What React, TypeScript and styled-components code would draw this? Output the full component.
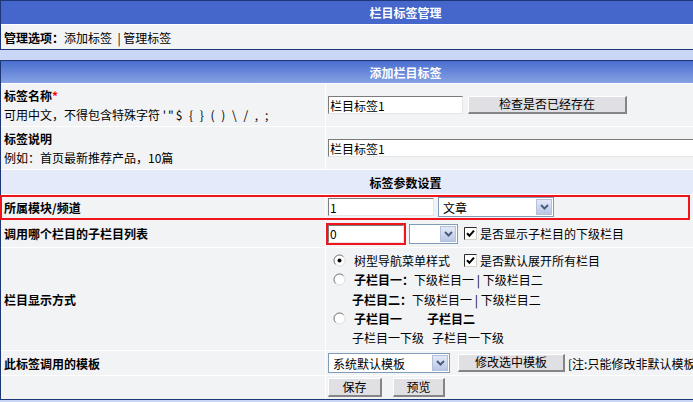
import * as React from "react";
import styled, { createGlobalStyle } from "styled-components";

const GlobalStyle = createGlobalStyle`
  html, body {
    margin: 0;
    padding: 0;
    overflow: hidden;
  }
  body {
    background: #c9d6f5;
    color: #000;
    font-family: "Noto Sans CJK SC", "DejaVu Sans", sans-serif;
    font-size: 12px;
  }
`;

const Tick: React.FC = () => (
  <TickBox viewBox="0 0 13 13" width="13" height="13">
    <rect x="0" y="0" width="13" height="13" fill="#fff" />
    <path d="M0.5 13 V0.5 H13" fill="none" stroke="#2b2b2b" />
    <path d="M12.5 0.5 V12.5 H0.5" fill="none" stroke="#d4d0c8" />
    <path d="M3 6.2 L5.4 8.8 L10 3.6" fill="none" stroke="#000" strokeWidth="2" />
  </TickBox>
);

const Radio: React.FC<{ on?: boolean }> = ({ on }) => (
  <RadioDot viewBox="0 0 13 13" width="13" height="13">
    <circle cx="6.5" cy="6.5" r="5.5" fill="#fff" stroke="#dcdcdc" />
    <path d="M2.6 10.4 A5.5 5.5 0 0 1 10.4 2.6" fill="none" stroke="#7a7a7a" />
    {on && <circle cx="6.5" cy="6.5" r="2" fill="#000" />}
  </RadioDot>
);

const Dropdown: React.FC<{ w: number; value?: string; gap?: number }> = ({ w, value, gap }) => (
  <DropBox $w={w} $gap={gap}>
    <DropText>{value}</DropText>
    <DropArrow>
      <svg viewBox="0 0 9 6" width="9" height="6">
        <path d="M1 1 L4.5 4.5 L8 1" fill="none" stroke="#4a5d83" strokeWidth="2" />
      </svg>
    </DropArrow>
  </DropBox>
);

export default function App() {
  return (
    <Page>
      <GlobalStyle />
      <Panel>
        <Caption $h={23}>栏目标签管理</Caption>
        <Bar>
          <Strong>管理选项：</Strong>添加标签&nbsp; | 管理标签
        </Bar>
      </Panel>

      <Panel $spaced>
        <Caption $h={22} $shaded>
          添加栏目标签
        </Caption>

        <Row $h={42}>
          <Label>
            <Strong>
              标签名称<Star>*</Star>
            </Strong>
            <span>可用中文，不得包含特殊字符 <Symbols>'"$ {"{"} {"}"} ( ) \ / , ;</Symbols></span>
          </Label>
          <Field>
            <TextBox $w={135} defaultValue="栏目标签1" readOnly />
            <Button $w={159} $h={18} $gap={5}>
              检查是否已经存在
            </Button>
          </Field>
        </Row>

        <Row $h={42}>
          <Label>
            <Strong>标签说明</Strong>
            <span>例如：首页最新推荐产品，10篇</span>
          </Label>
          <Field>
            <TextBox $w={430} defaultValue="栏目标签1" readOnly />
          </Field>
        </Row>

        <Section>标签参数设置</Section>

        <Row $h={24}>
          <Label>
            <Strong>所属模块/频道</Strong>
          </Label>
          <Field>
            <TextBox $w={106} defaultValue="1" readOnly />
            <Dropdown w={116} value="文章" gap={4} />
          </Field>
        </Row>

        <Row $h={27}>
          <Label>
            <Strong>调用哪个栏目的子栏目列表</Strong>
          </Label>
          <Field>
            <TextBox $w={76} defaultValue="0" readOnly $flag />
            <Dropdown w={49} gap={5} />
            <Spacer $w={6} />
            <Tick />
            <Note $gap={3}>是否显示子栏目的下级栏目</Note>
          </Field>
        </Row>

        <Row $h={102}>
          <Label>
            <Strong>栏目显示方式</Strong>
          </Label>
          <Choices>
            <Line>
              <Radio on />
              <Note $gap={8}>树型导航菜单样式</Note>
              <Spacer $w={14} />
              <Tick />
              <Note $gap={3}>是否默认展开所有栏目</Note>
            </Line>
            <Line>
              <Radio />
              <Note $gap={8}>
                <Strong>子栏目一：</Strong>下级栏目一 | 下级栏目二
              </Note>
            </Line>
            <Line $indent>
              <Note>
                <Strong>子栏目二：</Strong>下级栏目一 | 下级栏目二
              </Note>
            </Line>
            <Line>
              <Radio />
              <Note $gap={8}>
                <Strong>子栏目一</Strong>
              </Note>
              <Note $gap={25}>
                <Strong>子栏目二</Strong>
              </Note>
            </Line>
            <Line $indent>
              <Note>子栏目一下级</Note>
              <Note $gap={8}>子栏目一下级</Note>
            </Line>
          </Choices>
        </Row>

        <Row $h={24}>
          <Label>
            <Strong>此标签调用的模板</Strong>
          </Label>
          <Field>
            <Dropdown w={122} value="系统默认模板" />
            <Button $w={107} $h={18} $gap={8}>
              修改选中模板
            </Button>
            <Note $gap={3}>[注:只能修改非默认模板]</Note>
          </Field>
        </Row>

        <Row $h={23}>
          <Label />
          <Field>
            <Button $w={54} $h={19}>
              保存
            </Button>
            <Button $w={52} $h={19} $gap={11}>
              预览
            </Button>
          </Field>
        </Row>
      </Panel>

      <Mark />
    </Page>
  );
}

const Page = styled.div`
  position: relative;
  width: 811px;
`;

const Panel = styled.div<{ $spaced?: boolean }>`
  display: flex;
  flex-direction: column;
  gap: 1px;
  margin-top: ${(p) => (p.$spaced ? "10px" : "0")};
  border: 1px solid #1c3676;
  background: #fff;
`;

const Caption = styled.div<{ $h: number; $shaded?: boolean }>`
  height: ${(p) => p.$h}px;
  display: flex;
  align-items: center;
  justify-content: center;
  color: #fff;
  font-weight: bold;
  background: ${(p) => (p.$shaded ? "linear-gradient(#4a6ecf, #85a2e4)" : "#4567cc")};
`;

const Bar = styled.div`
  height: 24px;
  display: flex;
  align-items: center;
  padding: 0 3px;
  background: #f2f3f5;
  white-space: pre;
`;

const Section = styled.div`
  height: 24px;
  display: flex;
  align-items: center;
  justify-content: center;
  background: #e4eaf9;
  font-weight: bold;
`;

const Row = styled.div<{ $h: number }>`
  display: grid;
  grid-template-columns: 324px 1fr;
  gap: 1px;
  height: ${(p) => p.$h}px;
`;

const Label = styled.div`
  display: flex;
  flex-direction: column;
  justify-content: center;
  padding: 0 3px;
  background: #f2f3f5;
  line-height: 19px;
`;

const Field = styled.div`
  display: flex;
  align-items: center;
  padding: 0 2px;
  background: #f2f3f5;
  white-space: nowrap;
  overflow: hidden;
`;

const Choices = styled.div`
  display: flex;
  flex-direction: column;
  justify-content: center;
  padding: 0 2px;
  background: #f2f3f5;
  white-space: nowrap;
`;

const Line = styled.div<{ $indent?: boolean }>`
  height: 19.25px;
  display: flex;
  align-items: center;
  padding-left: ${(p) => (p.$indent ? "24px" : "0")};
`;

const Strong = styled.b`
  font-weight: bold;
`;

const Star = styled.span`
  color: #f00;
`;

const Symbols = styled.span`
  letter-spacing: 2px;
`;

const Note = styled.span<{ $gap?: number }>`
  margin-left: ${(p) => p.$gap ?? 0}px;
  line-height: 19px;
`;

const Spacer = styled.span<{ $w: number }>`
  display: inline-block;
  width: ${(p) => p.$w}px;
`;

const TextBox = styled.input<{ $w: number; $flag?: boolean }>`
  box-sizing: border-box;
  width: ${(p) => p.$w}px;
  height: 18px;
  margin: 0;
  padding: 0 1px;
  border: 1px solid;
  border-color: #7b7b7b #e6e6e6 #e6e6e6 #7b7b7b;
  background: #fff;
  color: #000;
  font: inherit;
  outline: ${(p) => (p.$flag ? "2px solid #f0141c" : "none")};
`;

const Button = styled.button<{ $w: number; $h: number; $gap?: number }>`
  box-sizing: border-box;
  width: ${(p) => p.$w}px;
  height: ${(p) => p.$h}px;
  margin: 0 0 0 ${(p) => p.$gap ?? 0}px;
  padding: 0 0 1px;
  border-style: solid;
  border-width: 1px 2px 2px 1px;
  border-color: #fff #858585 #858585 #fff;
  background: #e0dfe3;
  color: #000;
  font: inherit;
  line-height: 14px;
`;

const DropBox = styled.div<{ $w: number; $gap?: number }>`
  box-sizing: border-box;
  width: ${(p) => p.$w}px;
  height: 20px;
  margin-left: ${(p) => p.$gap ?? 0}px;
  display: flex;
  align-items: center;
  border: 1px solid #7f9db9;
  background: #fff;
`;

const DropText = styled.span`
  flex: 1;
  padding-left: 4px;
  overflow: hidden;
`;

const DropArrow = styled.span`
  box-sizing: border-box;
  width: 16px;
  height: 16px;
  margin-right: 1px;
  display: flex;
  align-items: center;
  justify-content: center;
  border: 1px solid #b3c1dc;
  background: linear-gradient(#e3e9f6, #b9c7e5);
`;

const TickBox = styled.svg`
  display: block;
  flex: none;
`;

const RadioDot = styled.svg`
  display: block;
  flex: none;
  margin-left: 5px;
`;

/* red frame drawn over the module/channel row */
const Mark = styled.div`
  position: absolute;
  left: 0;
  top: 195px;
  width: 690px;
  height: 25px;
  box-sizing: border-box;
  border: 2px solid #f0141c;
  pointer-events: none;
`;
